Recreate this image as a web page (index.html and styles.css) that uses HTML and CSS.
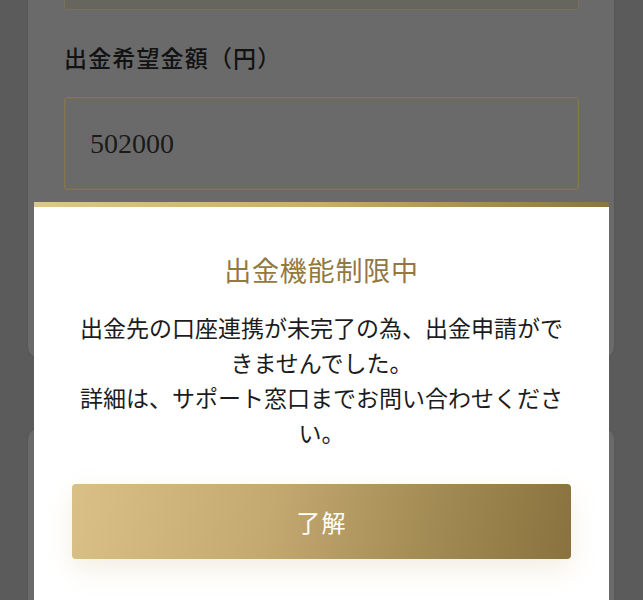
FILE: index.html
```html
<!DOCTYPE html>
<html lang="ja">
<head>
<meta charset="utf-8">
<title>出金機能制限中</title>
<link rel="stylesheet" href="styles.css">
</head>
<body>
<div class="page">
  <section class="card card-form">
    <div class="field field-prev"></div>
    <label class="label">出金希望金額（円）</label>
    <div class="field field-amount">502000</div>
  </section>
  <section class="card card-next"></section>
</div>

<div class="modal" role="dialog" aria-labelledby="modal-title">
  <div class="modal-bar"></div>
  <div class="modal-body">
    <h2 class="modal-title" id="modal-title">出金機能制限中</h2>
    <p class="modal-text">出金先の口座連携が未完了の為、出金申請ができませんでした。<br>詳細は、サポート窓口までお問い合わせください。</p>
    <button class="modal-button" type="button">了解</button>
  </div>
</div>
</body>
</html>
```

FILE: styles.css
```css
* {
  box-sizing: border-box;
}

html, body {
  margin: 0;
  padding: 0;
  height: 100%;
  overflow: hidden;
}

body {
  background: #5b5b5b;
  font-family: "Noto Sans CJK JP", "Noto Sans", sans-serif;
  color: #161616;
}

.page {
  margin-top: -60px;
  padding: 0 29px 0 28px;
  display: flex;
  flex-direction: column;
  gap: 70px;
}

.card {
  background: #6a6a6a;
  border-radius: 12px;
  box-shadow: 0 0 3px rgba(0, 0, 0, 0.08);
}

.card-form {
  padding: 0 35px 168px 36px;
  display: flex;
  flex-direction: column;
}

.field {
  border: 1px solid #86764a;
  border-radius: 3px;
}

.field-prev {
  height: 70px;
  background: #67665e;
  border-color: #76715a;
  margin-bottom: 30px;
}

.label {
  font-size: 23px;
  line-height: 34px;
  font-weight: 500;
  letter-spacing: 0.05em;
  color: #121212;
  margin-bottom: 23px;
}

.field-amount {
  height: 93px;
  display: flex;
  align-items: center;
  padding: 0 25px;
  font-family: "Liberation Serif", "Noto Sans CJK JP", serif;
  font-size: 28px;
  color: #1a1a1a;
  background: #6a6a6a;
  box-shadow: inset 0 0 0 1px rgba(134, 118, 74, 0.35);
}

.card-next {
  height: 300px;
}

.modal {
  position: fixed;
  left: 34px;
  right: 34px;
  top: 202px;
  bottom: 0;
  background: #ffffff;
  display: flex;
  flex-direction: column;
}

.modal-bar {
  height: 5px;
  background: linear-gradient(90deg, #dcc78f 0%, #c9ad6c 50%, #8b7443 100%);
}

.modal-body {
  padding: 43px 38px 0 38px;
  display: flex;
  flex-direction: column;
  align-items: stretch;
  text-align: center;
}

.modal-title {
  margin: 0 0 20px 0;
  font-size: 27px;
  line-height: 40px;
  font-weight: 400;
  letter-spacing: 0.03em;
  color: #93783f;
}

.modal-text {
  margin: 0 0 34px 0;
  font-size: 23px;
  line-height: 35px;
  font-weight: 400;
  color: #1c1c1c;
}

.modal-button {
  height: 75px;
  border: none;
  border-radius: 4px;
  background: linear-gradient(100deg, #d9c086 0%, #c3a970 40%, #a48c55 70%, #8a723f 100%);
  color: #ffffff;
  font-family: "Noto Sans CJK JP", sans-serif;
  font-size: 24px;
  font-weight: 400;
  letter-spacing: 0.05em;
  box-shadow: 0 10px 26px rgba(190, 160, 90, 0.18);
  cursor: pointer;
}
```
